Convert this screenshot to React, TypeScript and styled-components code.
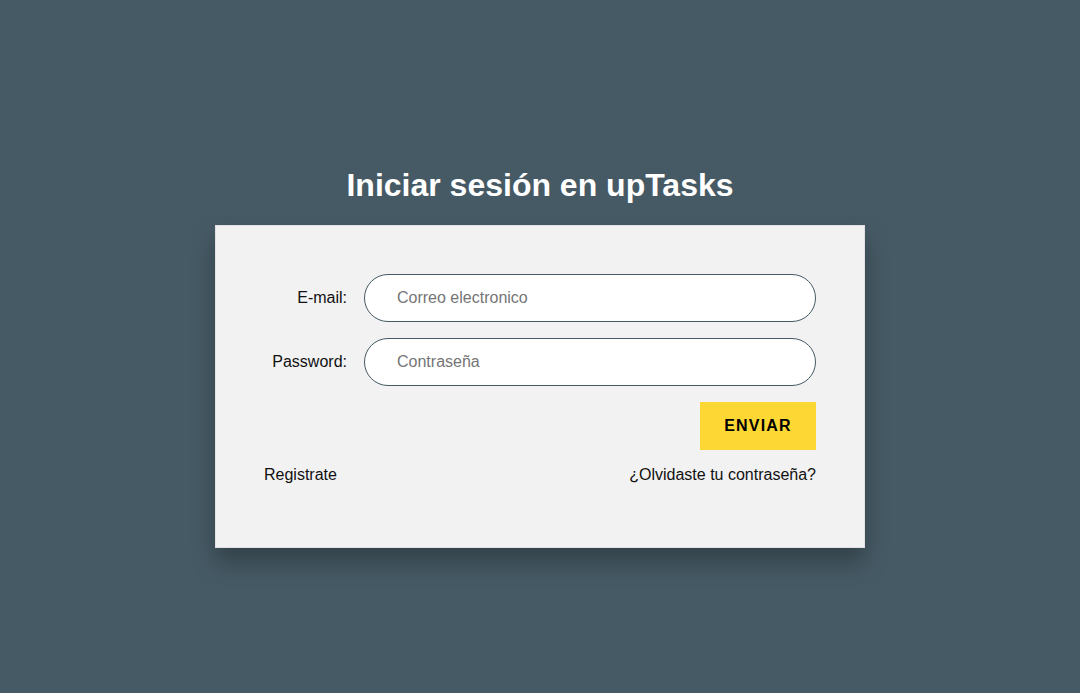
import React from "react";
import styled, { createGlobalStyle } from "styled-components";

const GlobalStyle = createGlobalStyle`
  html, body { margin: 0; padding: 0; }
  body {
    background: #465a65;
    font-family: "Liberation Sans", Arial, sans-serif;
    min-height: 693px;
  }
  * { box-sizing: border-box; }
`;

const Page = styled.main`
  display: flex;
  flex-direction: column;
  align-items: center;
  padding-top: 166px;
`;

const Title = styled.h1`
  margin: 0 0 21px;
  color: #ffffff;
  font-size: 32px;
  font-weight: 700;
  line-height: 38px;
  text-align: center;
`;

const Card = styled.form`
  width: 650px;
  background: #f2f2f2;
  border: 1px solid #e2e2e2;
  padding: 48px 48px 63px;
  box-shadow: 0 14px 22px rgba(0, 0, 0, 0.28);
  display: flex;
  flex-direction: column;
`;

const Field = styled.div`
  display: grid;
  grid-template-columns: 83px 1fr;
  column-gap: 17px;
  align-items: center;
  margin-bottom: 16px;
`;

const Label = styled.label`
  text-align: right;
  font-size: 16px;
  color: #111;
`;

const Input = styled.input`
  height: 48px;
  width: 100%;
  border: 1px solid #465a65;
  border-radius: 24px;
  background: #ffffff;
  padding: 0 32px;
  font-family: inherit;
  font-size: 16px;
  color: #111;
  outline: none;
  &::placeholder { color: #757575; }
`;

const Actions = styled.div`
  display: flex;
  justify-content: flex-end;
`;

const Submit = styled.button`
  width: 116px;
  height: 48px;
  border: none;
  background: #fdd835;
  font-family: inherit;
  font-weight: 700;
  font-size: 16px;
  letter-spacing: 1.2px;
  color: #000;
  cursor: pointer;
`;

const Links = styled.div`
  display: flex;
  justify-content: space-between;
  margin-top: 16px;
`;

const LinkText = styled.a`
  font-size: 16px;
  color: #111;
  text-decoration: none;
  line-height: 18px;
`;

export default function App() {
  return (
    <>
      <GlobalStyle />
      <Page>
        <Title>Iniciar sesión en upTasks</Title>
        <Card onSubmit={(e) => e.preventDefault()}>
          <Field>
            <Label htmlFor="email">E-mail:</Label>
            <Input id="email" type="email" placeholder="Correo electronico" />
          </Field>
          <Field>
            <Label htmlFor="password">Password:</Label>
            <Input id="password" type="password" placeholder="Contraseña" />
          </Field>
          <Actions>
            <Submit type="submit">ENVIAR</Submit>
          </Actions>
          <Links>
            <LinkText href="#">Registrate</LinkText>
            <LinkText href="#">¿Olvidaste tu contraseña?</LinkText>
          </Links>
        </Card>
      </Page>
    </>
  );
}
